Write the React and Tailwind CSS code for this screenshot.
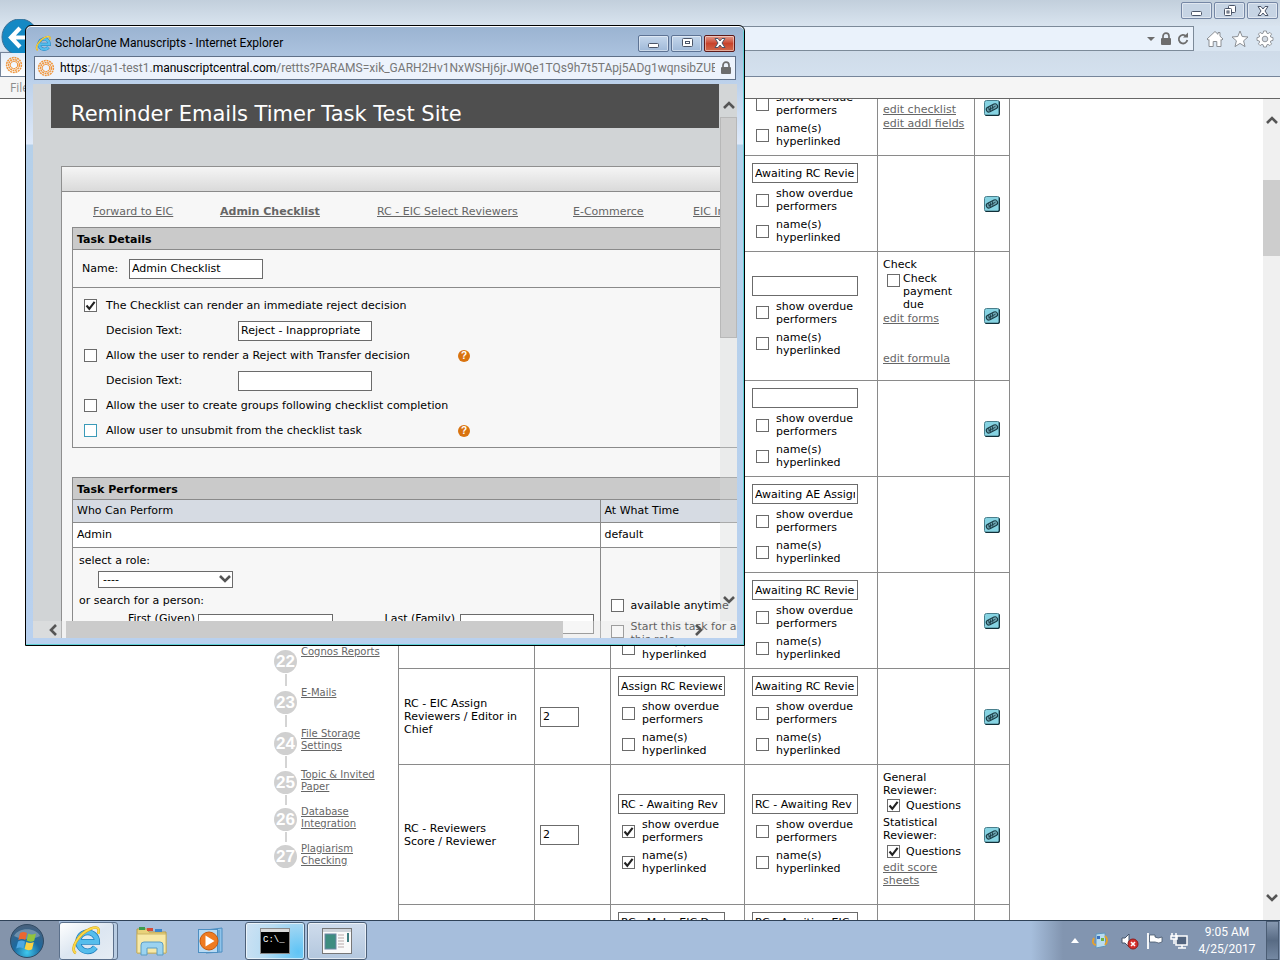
import React from "react";

const LINE = "border-[#8a8a8a]";

function Check({ id, checked, hot, className = "" }) {
  return (
    <span className={`grid size-[13px] shrink-0 ${className}`}>
      <input
        id={id}
        type="checkbox"
        defaultChecked={checked}
        className={`peer col-start-1 row-start-1 size-[13px] appearance-none border bg-white ${hot ? "border-[#3a9ab8]" : "border-[#6b6b6b]"}`}
      />
      <svg viewBox="0 0 13 13" className="pointer-events-none col-start-1 row-start-1 hidden size-[13px] peer-checked:block">
        <path d="M2.5 6.5 L5.3 9.8 L10.6 2.8" fill="none" stroke="#222" strokeWidth="2.1" />
      </svg>
    </span>
  );
}

function TextBox({ label, value = "", id, className = "" }) {
  return (
    <input
      id={id}
      aria-label={id ? undefined : label}
      defaultValue={value}
      className={`block h-[20px] border border-[#6b6b6b] bg-white px-[2px] text-[11px] ${className}`}
    />
  );
}

function EditButton() {
  return (
    <button aria-label="Edit task" className="mx-auto block size-[16px]">
      <svg viewBox="0 0 16 16" className="size-[16px]">
        <rect x="0.5" y="0.5" width="15" height="15" rx="2" fill="#86d3e2" stroke="#4a7f8c" />
        <path d="M15.3 1.5V14Q15.3 15.3 14 15.3H1.5" fill="none" stroke="#123039" strokeWidth="1.3" />
        <g transform="rotate(-27 8 8)">
          <rect x="2" y="5.4" width="12" height="5" rx="2.5" fill="#6fa9b6" stroke="#1b3c46" strokeWidth="1.1" />
          <path d="M5 5.5V10.3M7.2 5.8L5.6 10M9.6 5.8L8 10M4 8H12" stroke="#1b3c46" strokeWidth="0.8" />
        </g>
      </svg>
    </button>
  );
}

function StatusFields({ id, value, checked, name, box }) {
  return (
    <div className="px-[7px] leading-[13px]">
      <TextBox label={name} value={value} className={box} />
      <label className="mt-[4px] flex items-center gap-[7px] pl-[4px]">
        <Check id={id + "o"} checked={checked} />
        <span className="w-[84px]">show overdue performers</span>
      </label>
      <label className="mt-[5px] flex items-center gap-[7px] pl-[4px]">
        <Check id={id + "n"} checked={checked} />
        <span className="w-[84px]">name(s) hyperlinked</span>
      </label>
    </div>
  );
}

const link = "text-[#666] underline";

const rows = [
  {
    h: "h-[96px]", left: "", right: "",
    extra: (
      <div className="pt-[23px]">
        <span className="block pl-[20px]">Checklist</span>
        <a href="#c" className={`mt-px block ${link}`}>edit checklist</a>
        <a href="#f" className={`mt-px block ${link}`}>edit addl fields</a>
      </div>
    ),
  },
  { h: "h-[96px]", left: "", right: "Awaiting RC Revie" },
  {
    h: "h-[129px]", left: "", right: "",
    extra: (
      <div>
        <span className="block">Check</span>
        <label className="mt-px flex gap-[3px] pl-[4px]">
          <Check className="mt-[2px]" />
          <span className="w-[52px]">Check payment due</span>
        </label>
        <a href="#forms" className={`mt-px block ${link}`}>edit forms</a>
        <a href="#formula" className={`mt-[27px] block ${link}`}>edit formula</a>
      </div>
    ),
  },
  { h: "h-[96px]", left: "", right: "" },
  { h: "h-[96px]", left: "", right: "Awaiting AE Assign" },
  { h: "h-[96px]", left: "", right: "Awaiting RC Revie" },
  { h: "h-[96px]", name: "RC - EIC Assign Reviewers / Editor in Chief", num: "2", left: "Assign RC Reviewe", right: "Awaiting RC Revie" },
  {
    h: "h-[140px]", name: "RC - Reviewers Score / Reviewer", num: "2", left: "RC - Awaiting Rev", right: "RC - Awaiting Rev", leftOn: true,
    extra: (
      <div>
        <span className="block">General Reviewer:</span>
        <label className="my-[2px] flex items-center gap-[6px] pl-[4px]"><Check checked />Questions</label>
        <span className="mt-[4px] block">Statistical Reviewer:</span>
        <label className="mt-[3px] flex items-center gap-[6px] pl-[4px]"><Check checked />Questions</label>
        <a href="#sheets" className={`mt-[3px] block w-[70px] ${link}`}>edit score sheets</a>
      </div>
    ),
  },
  { h: "h-[96px]", left: "RC - Make EIC D", right: "RC - Awaiting EIC" },
];

const steps = [
  [22, "Cognos Reports", "h-[41px]", "mt-[4px]"],
  [23, "E-Mails", "h-[41px]", "mt-[4px]"],
  [24, "File Storage Settings", "h-[41px]", "mt-[4px]"],
  [25, "Topic & Invited Paper", "h-[37px]", "mt-[2px]"],
  [26, "Database Integration", "h-[37px]", "mt-[2px]"],
  [27, "Plagiarism Checking", "h-[37px]", "mt-[2px]"],
];

function Swirl() {
  return (
    <svg viewBox="0 0 18 18" className="size-[18px] shrink-0">
      <g fill="none" stroke="#f0953a">
        <circle cx="9" cy="9" r="7.4" strokeWidth="1.5" strokeDasharray="2 0.7" />
        <circle cx="9" cy="9" r="5.4" strokeWidth="1.4" strokeDasharray="2 0.6" />
        <circle cx="9" cy="9" r="3.7" strokeWidth="1.2" strokeDasharray="1.8 0.5" />
      </g>
    </svg>
  );
}

function IELogo({ className }) {
  return (
    <svg viewBox="0 0 32 32" className={className}>
      <path d="M8 17.5H27A9.8 9.8 0 1 0 25.2 23" fill="none" stroke="#1f7fbd" strokeWidth="6" />
      <path d="M8 17.5H27A9.8 9.8 0 1 0 25.2 23" fill="none" stroke="#55bdec" strokeWidth="4.4" />
      <path d="M5 29C-2 25 8 9 20 4C27 1 30 3 28 9" fill="none" stroke="#d9a514" strokeWidth="2.8" />
      <path d="M5 29C-2 25 8 9 20 4C27 1 30 3 28 9" fill="none" stroke="#fbd94b" strokeWidth="1.8" />
    </svg>
  );
}

function Lock() {
  return (
    <svg viewBox="0 0 12 14" className="h-[14px] w-[12px] shrink-0">
      <path d="M3 7V4.2a3 3 0 0 1 6 0V7" fill="none" stroke="#6d6d6d" strokeWidth="1.7" />
      <rect x="1" y="6" width="10" height="7" rx="1" fill="#6d6d6d" />
    </svg>
  );
}

function Chevron({ dir, className = "" }) {
  const d = { up: "M2 10L7 5L12 10", down: "M2 4L7 9L12 4", left: "M9 2L4 7L9 12", right: "M5 2L10 7L5 12" }[dir];
  return (
    <svg viewBox="0 0 14 14" className={`size-[14px] shrink-0 ${className}`}>
      <path d={d} fill="none" stroke="#555" strokeWidth="2.6" />
    </svg>
  );
}

function WinButton({ kind, label, tone }) {
  return (
    <button aria-label={label} className={`flex h-[17px] w-[31px] items-center justify-center rounded-[2px] border shadow-[inset_0_0_0_1px_rgba(255,255,255,0.45)] ${tone}`}>
      <svg viewBox="0 0 14 12" className="h-[12px] w-[14px]" fill="#fff" stroke="#4b5568">
        {kind === "min" && <rect x="1.5" y="6.5" width="10" height="4" rx="1" />}
        {kind === "max" && <g><rect x="2.5" y="1.5" width="10" height="8" rx="1" /><rect x="5.5" y="4.5" width="4" height="2" /></g>}
        {kind === "restore" && <g><rect x="5.5" y="0.5" width="7" height="7" rx="1" /><rect x="1.5" y="3.5" width="7" height="7" rx="1" /><rect x="4" y="6" width="2" height="2" /></g>}
        {kind === "close" && <path d="M2 1.5H5L7 4L9 1.5H12L9 6L12 10.5H9L7 8L5 10.5H2L5 6Z" />}
      </svg>
    </button>
  );
}

function Header() {
  const tone = "border-[#7587a5] bg-[#c6d4e4]";
  return (
    <header className="relative shrink-0 bg-gradient-to-b from-[#c4d0dd] to-[#d9e6f4] font-['Open_Sans',sans-serif]">
      <div className="flex h-[26px] justify-end gap-[2px] bg-gradient-to-b from-[#c2cfdc] to-[#d9e4ef] pt-[2px] pr-[2px]">
        <WinButton kind="min" label="Minimize browser" tone={tone} />
        <WinButton kind="restore" label="Restore browser" tone={tone} />
        <WinButton kind="close" label="Close browser" tone={tone} />
      </div>
      <div className="flex h-[25px] items-stretch bg-[#d9e5f1]">
        <div className="ml-[40px] flex flex-1 items-center justify-end gap-[5px] border border-[#7c8a99] bg-[#eaf2fb] pr-[4px]">
          <svg viewBox="0 0 8 4" className="h-[4px] w-[8px]"><path d="M0 0H8L4 4Z" fill="#6d6d6d" /></svg>
          <Lock />
          <svg viewBox="0 0 12 14" className="h-[14px] w-[12px]"><path d="M9.2 4.2A4.3 4.3 0 1 0 10.3 8" fill="none" stroke="#6d6d6d" strokeWidth="1.8" /><path d="M6 5.5H11V0.5Z" fill="#6d6d6d" /></svg>
        </div>
        <div className="flex w-[86px] items-center gap-[7px] pl-[12px]">
          <svg viewBox="0 0 18 18" className="size-[18px]" fill="#fff" stroke="#8b8f94"><path d="M1 9L9 1.5L12 4.3V2.5H14V6.2L17 9L15.8 10.2L15 9.5V16.5H10.8V11.5H7.2V16.5H3V9.5L2.2 10.2Z" /></svg>
          <svg viewBox="0 0 18 18" className="size-[18px]" fill="#fff" stroke="#8b8f94"><path d="M9 1L11.2 6.5L17 7L12.6 10.8L14 16.6L9 13.4L4 16.6L5.4 10.8L1 7L6.8 6.5Z" /></svg>
          <svg viewBox="0 0 18 18" className="size-[18px]" fill="#fff" stroke="#8b8f94" strokeWidth="0.9">
            <path d="M7.6 1H10.4L10.9 3.2L12 3.7L13.9 2.4L15.6 4.1L14.3 6L14.8 7.1L17 7.6V10.4L14.8 10.9L14.3 12L15.6 13.9L13.9 15.6L12 14.3L10.9 14.8L10.4 17H7.6L7.1 14.8L6 14.3L4.1 15.6L2.4 13.9L3.7 12L3.2 10.9L1 10.4V7.6L3.2 7.1L3.7 6L2.4 4.1L4.1 2.4L6 3.7L7.1 3.2Z" />
            <circle cx="9" cy="9" r="2.8" fill="#d3dbe4" />
          </svg>
        </div>
      </div>
      <div className="flex h-[26px] items-end border-b border-[#76859a]">
        <div className="flex h-[24px] w-[200px] items-center border border-b-0 border-[#76859a] bg-gradient-to-b from-[#e4eef9] to-white pl-[4px]"><Swirl /></div>
      </div>
      <div className="flex h-[22px] items-center border-b border-[#666] bg-[#f5f5f5] pl-[10px] text-[12px] text-[#8c8c8c]">File</div>
      <button aria-label="Back" className="absolute top-[19px] left-0 flex h-[34px] w-[38px] overflow-hidden">
        <svg viewBox="0 0 38 36" className="h-[36px] w-[38px]">
          <circle cx="20" cy="18" r="18" fill="#1489c4" stroke="#3b6f95" />
          <path d="M20 9L11 18.5L20 28M11.5 18.5H30" fill="none" stroke="#fff" strokeWidth="4.2" />
        </svg>
      </button>
    </header>
  );
}

function Desktop() {
  return (
    <main className="flex min-h-0 flex-1 bg-white font-['DejaVu_Sans',sans-serif] text-[11px] text-black">
      <div className="flex min-w-0 flex-1 items-start overflow-hidden pl-[274px]">
        <nav aria-label="Configuration steps" className="w-[124px] shrink-0 pt-[547px] text-[10px] leading-[12px]">
          {steps.map(([n, text, h, top], i) => (
            <div key={n} className={`flex gap-[4px] ${h}`}>
              <div className="flex w-[23px] flex-col items-center">
                <span className={`flex size-[23px] shrink-0 items-center justify-center rounded-full bg-[#d0d0d0] font-['Liberation_Sans',sans-serif] text-[17px] font-bold text-white ${top}`}>{n}</span>
                {i < 5 && <span className="my-px w-[2px] flex-1 bg-[#d4d4d4]" />}
              </div>
              <a href={"#step" + n} className={`w-[88px] ${link}`}>{text}</a>
            </div>
          ))}
        </nav>
        <table className="-mt-[40px] w-[612px] table-fixed border-collapse leading-[13px]">
          <colgroup>
            <col className="w-[136px]" /><col className="w-[76px]" /><col className="w-[134px]" /><col className="w-[133px]" /><col className="w-[97px]" /><col className="w-[35px]" />
          </colgroup>
          <tbody>
            {rows.map((r, i) => (
              <tr key={i} className={r.h}>
                <td className={`border ${LINE} pr-[15px] pl-[5px]`}>{r.name}</td>
                <td className={`border ${LINE} pl-[5px]`}>{r.num && <TextBox label="Order" value={r.num} className="w-[39px]" />}</td>
                <td className={`border ${LINE}`}><StatusFields id={"l" + i} value={r.left} checked={r.leftOn} name="Status" box="w-[107px]" /></td>
                <td className={`border ${LINE}`}><StatusFields id={"r" + i} value={r.right} name="Status when waiting" box="w-[106px]" /></td>
                <td className={`border ${LINE} pt-[6px] pl-[5px] align-top`}>{r.extra}</td>
                <td className={`border ${LINE}`}><EditButton /></td>
              </tr>
            ))}
          </tbody>
        </table>
      </div>
      <div className="flex w-[17px] shrink-0 flex-col items-center bg-[#f0f0f0] pt-[14px] pb-[15px]">
        <Chevron dir="up" />
        <div className="mt-[53px] h-[76px] w-full bg-[#cdcdcd]" />
        <Chevron dir="down" className="mt-auto" />
      </div>
    </main>
  );
}

function Help() {
  return <button aria-label="Help" className="flex size-[12px] items-center justify-center rounded-full bg-[#d9730f] font-['Liberation_Sans',sans-serif] text-[10px] leading-none font-bold text-white">?</button>;
}

function OptionRow({ id, label, checked, hot, help }) {
  return (
    <div className="flex h-[25px] items-center">
      <Check id={id} checked={checked} hot={hot} />
      <label htmlFor={id} className="w-[361px] pl-[9px]">{label}</label>
      {help && <Help />}
    </div>
  );
}

function DecisionRow({ id, value }) {
  return (
    <div className="flex h-[25px] items-center pl-[22px]">
      <label htmlFor={id} className="w-[132px]">Decision Text:</label>
      <TextBox id={id} value={value} className="w-[134px]" />
    </div>
  );
}

function Popup() {
  const tone = "border-[#5d7394] bg-gradient-to-b from-[#c5d7ec] to-[#9fb9d8]";
  return (
    <section aria-label="ScholarOne Manuscripts" className="absolute top-[25px] left-[25px] flex h-[621px] w-[720px] flex-col rounded-t-[6px] border border-black bg-[linear-gradient(to_bottom,#9ab3d1_0,#bcd1eb_56px,#dfeafa_118px,#b5d0ea_119px,#b9d1ef_100%)] px-[7px] pb-[7px] shadow-[inset_0_1px_0_#fff,inset_-1px_-1px_0_#5fd0d6]">
      <div className="flex h-[30px] items-center pl-[2px] font-['Roboto',sans-serif]">
        <IELogo className="mt-[4px] size-[17px]" />
        <h1 className="mt-[4px] ml-[3px] flex-1 text-[12px] whitespace-nowrap text-black">ScholarOne Manuscripts - Internet Explorer</h1>
        <div className="mt-[4px] flex gap-[2px] pr-[2px]">
          <WinButton kind="min" label="Minimize" tone={tone} />
          <WinButton kind="max" label="Maximize" tone={tone} />
          <WinButton kind="close" label="Close" tone="border-[#5d1a1a] bg-gradient-to-b from-[#e29a8c] via-[#c8432c] to-[#d0694c]" />
        </div>
      </div>
      <div className="mx-px flex h-[24px] shrink-0 items-center gap-[5px] border border-[#5f7088] bg-[#edf3fc] pr-[3px] pl-[2px] font-['Roboto',sans-serif] text-[12px] text-[#777]">
        <Swirl />
        <span className="min-w-0 flex-1 overflow-hidden whitespace-nowrap"><span className="text-black">https</span>://qa1-test1.<span className="text-black">manuscriptcentral.com</span>/rettts?PARAMS=xik_GARH2Hv1NxWSHj6jrJWQe1TQs9h7t5TApj5ADg1wqnsibZUBAcE</span>
        <Lock />
      </div>
      <div className="relative mt-[4px] min-h-0 flex-1 overflow-hidden bg-[#d1d4d6] font-['DejaVu_Sans',sans-serif] text-[11px] leading-[13px] text-black">
        <h2 className="mx-[18px] flex h-[44px] items-center bg-[#4f4f4f] pt-[16px] pl-[20px] text-[21px] text-white">Reminder Emails Timer Task Test Site</h2>
        <div className="mt-[38px] ml-[28px] w-[900px] border border-[#8f8f8f] bg-[#f7f7f7] pb-[40px]">
          <div className={`h-[25px] border-b ${LINE} bg-gradient-to-b from-[#f5f5f5] to-[#dadada]`} />
          <nav aria-label="Tasks" className="grid h-[35px] grid-cols-[127px_157px_196px_120px_auto] items-center pt-[4px] pl-[31px] text-[#666] underline">
            <a href="#forward">Forward to EIC</a>
            <a href="#admin" className="font-bold">Admin Checklist</a>
            <a href="#select">RC - EIC Select Reviewers</a>
            <a href="#commerce">E-Commerce</a>
            <a href="#invite">EIC Invite</a>
          </nav>
          <div className={`ml-[10px] border ${LINE}`}>
            <h3 className={`flex h-[22px] items-center border-b ${LINE} bg-[#cacaca] pt-px pl-[4px] font-bold`}>Task Details</h3>
            <div className={`flex h-[38px] items-center border-b ${LINE} pl-[9px]`}>
              <label htmlFor="name" className="w-[47px]">Name:</label>
              <TextBox id="name" value="Admin Checklist" className="w-[134px]" />
            </div>
            <div className="pt-[5px] pb-[4px] pl-[11px]">
              <OptionRow id="reject" label="The Checklist can render an immediate reject decision" checked />
              <DecisionRow id="decision1" value="Reject - Inappropriate" />
              <OptionRow id="transfer" label="Allow the user to render a Reject with Transfer decision" help />
              <DecisionRow id="decision2" />
              <OptionRow id="groups" label="Allow the user to create groups following checklist completion" />
              <OptionRow id="unsubmit" label="Allow user to unsubmit from the checklist task" hot help />
            </div>
          </div>
          <div className={`mt-[29px] ml-[10px] border ${LINE}`}>
            <h3 className={`flex h-[22px] items-center border-b ${LINE} bg-[#cacaca] pt-px pl-[4px] font-bold`}>Task Performers</h3>
            <table className="w-full table-fixed border-collapse">
              <colgroup><col className="w-[527px]" /><col /></colgroup>
              <thead>
                <tr className={`h-[22px] border-b ${LINE} bg-[#d6dbe3] text-left`}>
                  <th className={`border-r ${LINE} pl-[4px] font-normal`}>Who Can Perform</th>
                  <th className="pl-[4px] font-normal">At What Time</th>
                </tr>
              </thead>
              <tbody>
                <tr className={`h-[25px] border-b ${LINE} bg-white`}>
                  <td className={`border-r ${LINE} pl-[4px]`}>Admin</td>
                  <td className="pl-[4px]">default</td>
                </tr>
                <tr>
                  <td className={`border-r ${LINE} pt-[6px] pl-[6px] align-top`}>
                    <label htmlFor="role" className="block">select a role:</label>
                    <div className="mt-[4px] ml-[19px] grid w-[135px] items-center">
                      <select id="role" className="col-start-1 row-start-1 h-[17px] w-full appearance-none border border-[#6b6b6b] bg-white pl-[4px] leading-[13px]"><option>----</option></select>
                      <Chevron dir="down" className="pointer-events-none col-start-1 row-start-1 mr-px justify-self-end" />
                    </div>
                    <span className="mt-[6px] block">or search for a person:</span>
                    <div className="mt-[7px] flex items-start">
                      <label htmlFor="first" className="-mt-[2px] w-[119px] pr-[3px] text-right">First (Given)</label>
                      <TextBox id="first" className="w-[135px]" />
                      <label htmlFor="last" className="-mt-[2px] w-[127px] pr-[5px] text-right">Last (Family)</label>
                      <TextBox id="last" className="w-[134px]" />
                    </div>
                  </td>
                  <td className="pt-[51px] pl-[10px] align-top">
                    <label className="flex items-center gap-[7px]"><Check />available anytime</label>
                    <label className="mt-[8px] flex items-start gap-[7px]"><Check className="mt-[5px]" /><span className="w-[140px]">Start this task for any this role</span></label>
                  </td>
                </tr>
              </tbody>
            </table>
          </div>
        </div>
        <div className="absolute top-0 right-0 bottom-[17px] flex w-[17px] flex-col items-center bg-[#d8dada]/40 pt-[14px] pb-[14px]">
          <Chevron dir="up" />
          <div className="mt-[5px] h-[221px] w-full border border-[#b8b8b8] bg-[#cdcdcd]" />
          <Chevron dir="down" className="mt-auto" />
        </div>
        <div className="absolute right-0 bottom-0 left-0 flex h-[17px] items-center bg-[#e9e9e8]/40 pr-[32px] pl-[14px]">
          <Chevron dir="left" />
          <div className="ml-[5px] h-full w-[497px] bg-[#cbcbcb]" />
          <Chevron dir="right" className="ml-auto" />
        </div>
      </div>
    </section>
  );
}

function Taskbar() {
  const btn = "flex h-[38px] items-center justify-center rounded-[3px] border border-[#4c6078] shadow-[inset_0_0_0_1px_rgba(255,255,255,0.6)]";
  return (
    <footer className="flex h-[40px] shrink-0 items-center border-t border-[#2f4258] bg-[#a6bedc] font-['Open_Sans',sans-serif]">
      <button aria-label="Start" className="flex h-full w-[59px] items-center bg-[#8494ab] pl-[9px]">
        <svg viewBox="0 0 36 36" className="size-[36px]">
          <defs>
            <radialGradient id="orb" cx="50%" cy="85%" r="80%"><stop offset="0" stopColor="#3fc9ee" /><stop offset=".5" stopColor="#1c699f" /><stop offset="1" stopColor="#46617e" /></radialGradient>
          </defs>
          <circle cx="18" cy="18" r="16.5" fill="url(#orb)" stroke="#304a63" />
          <path d="M5 13C9 4 27 4 31 13C24 17 12 17 5 13Z" fill="#fff" opacity=".28" />
          <path d="M11 10Q14.5 8 18 10L16.3 17Q13 15 9.3 17Z" fill="#ec6730" />
          <path d="M19.3 10.6Q22.5 12.6 27 10.6L25.2 17.7Q21.5 19.7 17.6 17.6Z" fill="#91c43e" />
          <path d="M9 18.4Q12.8 16.5 16 18.4L14.4 25.6Q11 23.6 7.2 25.6Z" fill="#4ea7e2" />
          <path d="M17.3 19Q21 21 24.8 19L23.1 26.2Q19.5 28.2 15.6 26.1Z" fill="#fbd143" />
        </svg>
      </button>
      <div className="flex h-[38px] w-[59px] rounded-[3px] border border-[#5b708b] bg-[#b8cce2]">
        <button aria-label="Internet Explorer" className="flex h-full w-[54px] items-center justify-center rounded-[3px] border-r border-[#5b708b] bg-gradient-to-br from-white via-[#dce6f1] to-[#e6edf4]"><IELogo className="size-[31px]" /></button>
      </div>
      <button aria-label="File Explorer" className="ml-[17px]">
        <svg viewBox="0 0 34 30" className="h-[30px] w-[34px]">
          <path d="M2 3H12L14 6H31V27H2Z" fill="#e8d27a" stroke="#b79d4a" />
          <rect x="4" y="1" width="6" height="3" fill="#3d9d4f" /><rect x="12" y="2" width="6" height="3" fill="#d54b37" /><rect x="20" y="3" width="7" height="3" fill="#3e86cb" />
          <path d="M2 8H31V27H2Z" fill="#f7e9a7" stroke="#cbb566" />
          <path d="M6 29V19Q6 16 9 16H25Q28 16 28 19V29H22V22H12V29Z" fill="#9bd3f0" stroke="#5b9cc4" />
        </svg>
      </button>
      <button aria-label="Media Player" className="ml-[28px]">
        <svg viewBox="0 0 30 28" className="h-[28px] w-[30px]">
          <path d="M9 3L25 1V25L9 26Z" fill="#8fc3ea" stroke="#4d8fc2" /><path d="M22 3V25" stroke="#4d8fc2" />
          <rect x="1.5" y="2.5" width="19" height="23" fill="#b7daf4" stroke="#4d8fc2" />
          <circle cx="12" cy="14" r="9" fill="#ee7b22" stroke="#c75a0e" /><path d="M8.5 8.5L17.5 14L8.5 19.5Z" fill="#fff" />
        </svg>
      </button>
      <button aria-label="Command Prompt" className={`ml-[18px] w-[60px] ${btn} bg-[radial-gradient(circle_at_90%_80%,#5fc4f5,#b9dcf2_60%,#cfe2f3)]`}>
        <svg viewBox="0 0 30 26" className="h-[26px] w-[30px]">
          <rect x="0.5" y="0.5" width="29" height="25" fill="#000" stroke="#888" /><rect x="1" y="1" width="28" height="3" fill="#d8d8d8" />
          <text x="3" y="14" fill="#fff" fontSize="9" fontFamily="Liberation Mono, monospace">C:\_</text>
        </svg>
      </button>
      <button aria-label="Application" className={`ml-[2px] w-[60px] ${btn} bg-gradient-to-b from-[#cfdcec] to-[#b3c7de]`}>
        <svg viewBox="0 0 30 26" className="h-[26px] w-[30px]">
          <rect x="0.5" y="0.5" width="29" height="25" fill="#fafafa" stroke="#777" /><rect x="1" y="1" width="28" height="3" fill="#cfd4da" />
          <rect x="3" y="6" width="11" height="15" fill="#3e8d80" stroke="#6d86a5" />
          <path d="M16 7H22M16 10H22M16 13H22M16 16H22M16 19H22" stroke="#b7a9a9" /><rect x="25" y="5" width="2" height="9" fill="#3e7d80" />
        </svg>
      </button>
      <div className="ml-auto flex h-full items-center bg-[linear-gradient(to_right,#a6bedc_0,#8295b0_32px)] pl-[40px] text-[12px] leading-[17px] text-white">
        <svg viewBox="0 0 8 5" className="h-[5px] w-[8px]"><path d="M0 5L4 0L8 5Z" fill="#fff" /></svg>
        <svg viewBox="0 0 16 18" className="ml-[13px] h-[18px] w-[16px]">
          <path d="M4 2L13 1L14 14L4 16Z" fill="#b8dcf0" stroke="#5e95bd" /><rect x="5" y="4" width="3" height="3" fill="#3971c0" /><rect x="9" y="6" width="3" height="3" fill="#6fb344" /><path d="M2 6Q-1 12 4 13M13 4Q17 8 13 13" fill="none" stroke="#e5a12c" strokeWidth="1.8" />
        </svg>
        <svg viewBox="0 0 18 18" className="ml-[13px] h-[18px] w-[18px]">
          <path d="M1 6H4L8 2V15L4 11H1Z" fill="#fff" stroke="#45556b" /><circle cx="12" cy="12" r="5" fill="#d5302c" stroke="#8e1c1c" /><path d="M10 10L14 14M14 10L10 14" stroke="#fff" strokeWidth="1.6" />
        </svg>
        <svg viewBox="0 0 18 18" className="ml-[7px] h-[18px] w-[18px]"><path d="M2 1V17" stroke="#fff" strokeWidth="1.8" /><path d="M3.5 3H9V5Q12 7 16 5V10Q13 12 9 10H3.5Z" fill="#fff" stroke="#45556b" strokeWidth=".8" /></svg>
        <svg viewBox="0 0 18 18" className="ml-[6px] h-[18px] w-[18px]" fill="none" stroke="#fff" strokeWidth="1.5"><rect x="6" y="4" width="11" height="9" fill="#53657f" /><path d="M8 16H16M12 13V16M2 1V4M6 1V4M1 4H7V7H1ZM4 7V12" /></svg>
        <div className="w-[78px] text-center font-['Roboto',sans-serif]"><div>9:05 AM</div><div>4/25/2017</div></div>
        <button aria-label="Show desktop" className="mr-px h-full w-[13px] border border-[#4b5d74] bg-gradient-to-b from-[#8799b1] via-[#586b84] to-[#7589a3]" />
      </div>
    </footer>
  );
}

export default function App() {
  return (
    <div className="relative flex h-screen flex-col overflow-hidden">
      <Header />
      <Desktop />
      <Taskbar />
      <Popup />
    </div>
  );
}
